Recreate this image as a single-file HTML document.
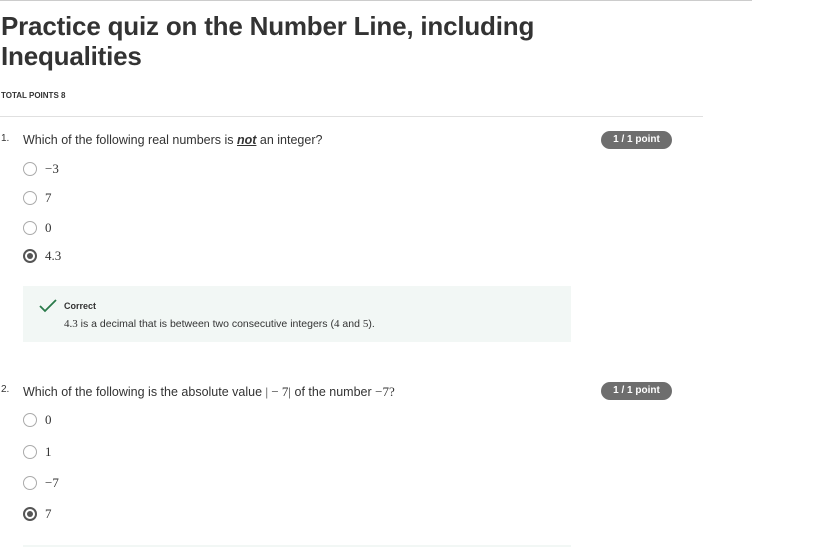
<!DOCTYPE html>
<html><head><meta charset="utf-8"><style>
body{margin:0;width:819px;height:547px;background:#fff;position:relative;overflow:hidden;font-family:"Liberation Sans",sans-serif;color:#1f1f1f}
.a{position:absolute;white-space:nowrap}
.r{position:absolute;width:14px;height:14px;border:1px solid #aaa;border-radius:50%;box-sizing:border-box}
.sel{border:2px solid #555;display:flex;align-items:center;justify-content:center}
.sel i{display:block;width:6px;height:6px;border-radius:50%;background:#555}
.m{font-family:"Liberation Serif",serif;font-size:13px;color:#333}
.badge{position:absolute;left:601px;width:71px;height:18px;border-radius:9px;background:#6e6e6e;color:#fff;font-size:10px;font-weight:bold;text-align:center;line-height:18px}
.q{font-size:12.5px;color:#333}
</style></head><body>
<div class="a" style="left:0;top:0;width:752px;height:1px;background:#ccc"></div>
<div class="a" style="left:1px;top:11px;font-size:26px;font-weight:bold;color:#333;line-height:30px;letter-spacing:-0.2px">Practice quiz on the Number Line, including<br>Inequalities</div>
<div class="a" style="left:1px;top:91px;font-size:8px;font-weight:bold;color:#333">TOTAL POINTS 8</div>
<div class="a" style="left:0;top:116px;width:703px;height:1px;background:#e0e0e0"></div>

<div class="a q" style="left:1px;top:133px;font-size:10px">1.</div>
<div class="a q" style="left:23px;top:133px">Which of the following real numbers is <b><i><u>not</u></i></b> an integer?</div>
<div class="badge" style="top:131px">1 / 1 point</div>
<div class="r" style="left:23px;top:162px"></div><div class="a m" style="left:45px;top:161px">−3</div>
<div class="r" style="left:23px;top:191px"></div><div class="a m" style="left:45px;top:190px">7</div>
<div class="r" style="left:23px;top:221px"></div><div class="a m" style="left:45px;top:220px">0</div>
<div class="r sel" style="left:23px;top:249px"><i></i></div><div class="a m" style="left:45px;top:248px">4.3</div>

<div class="a" style="left:23px;top:286px;width:548px;height:56px;background:#f2f7f5"></div>
<svg class="a" style="left:39px;top:299px" width="18" height="14" viewBox="0 0 18 14"><path d="M1 7 L6 12 L17 1" fill="none" stroke="#2a7a4a" stroke-width="1.8"/></svg>
<div class="a" style="left:64px;top:301px;font-size:9px;font-weight:bold;color:#333">Correct</div>
<div class="a" style="left:64px;top:318px;font-size:10.5px;color:#333"><span class="m" style="font-size:11px">4.3</span> is a decimal that is between two consecutive integers (<span class="m" style="font-size:11px">4</span> and <span class="m" style="font-size:11px">5</span>).</div>

<div class="a q" style="left:1px;top:384px;font-size:10px">2.</div>
<div class="a q" style="left:23px;top:384px">Which of the following is the absolute value <span class="m">|&nbsp;−&nbsp;7|</span> of the number <span class="m">−7?</span></div>
<div class="badge" style="top:382px">1 / 1 point</div>
<div class="r" style="left:23px;top:413px"></div><div class="a m" style="left:45px;top:412px">0</div>
<div class="r" style="left:23px;top:445px"></div><div class="a m" style="left:45px;top:444px">1</div>
<div class="r" style="left:23px;top:476px"></div><div class="a m" style="left:45px;top:475px">−7</div>
<div class="r sel" style="left:23px;top:507px"><i></i></div><div class="a m" style="left:45px;top:506px">7</div>
<div class="a" style="left:23px;top:545px;width:548px;height:2px;background:#f2f7f5"></div>
</body></html>
